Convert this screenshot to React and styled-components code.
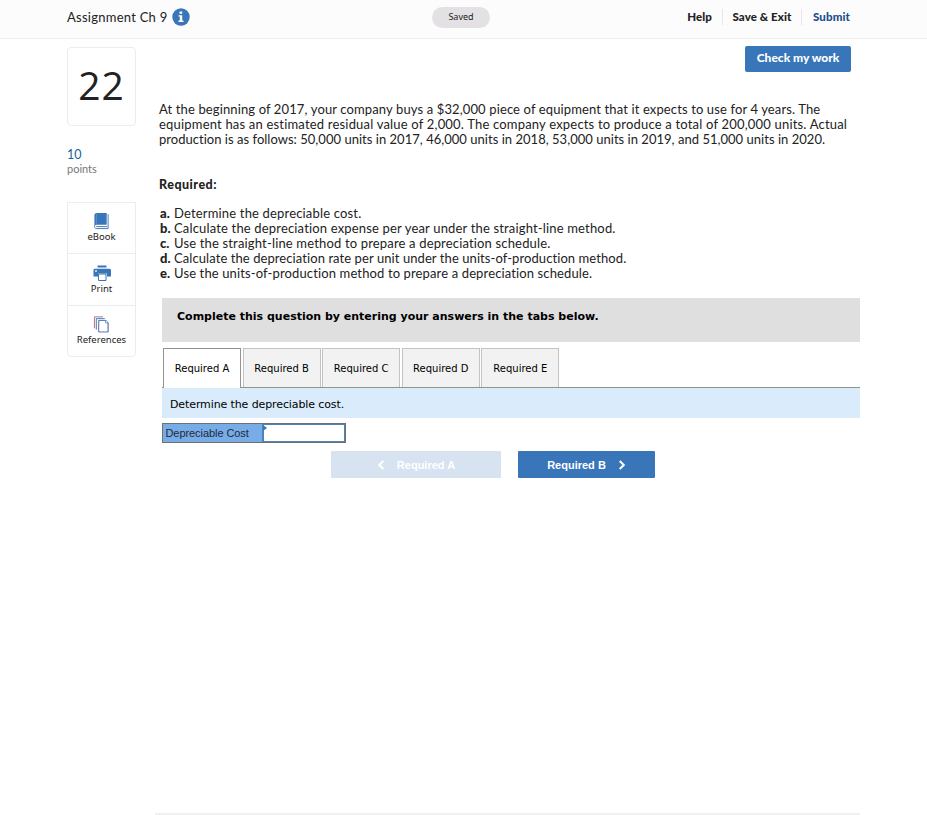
import { useState } from "react";
import styled, { createGlobalStyle } from "styled-components";

const intro = [
  {
    text: "At the beginning of 2017, your company buys a $32,000 piece of equipment that it expects to use for 4 years. The",
    spacing: 0.125,
  },
  {
    text: "equipment has an estimated residual value of 2,000. The company expects to produce a total of 200,000 units. Actual",
    spacing: 0.19,
  },
  {
    text: "production is as follows: 50,000 units in 2017, 46,000 units in 2018, 53,000 units in 2019, and 51,000 units in 2020.",
    spacing: 0.025,
  },
];

const tasks = [
  { mark: "a.", text: "Determine the depreciable cost.", spacing: 0.17 },
  {
    mark: "b.",
    text: "Calculate the depreciation expense per year under the straight-line method.",
    spacing: 0.165,
  },
  {
    mark: "c.",
    text: "Use the straight-line method to prepare a depreciation schedule.",
    spacing: 0.165,
  },
  {
    mark: "d.",
    text: "Calculate the depreciation rate per unit under the units-of-production method.",
    spacing: 0.08,
  },
  {
    mark: "e.",
    text: "Use the units-of-production method to prepare a depreciation schedule.",
    spacing: 0.13,
  },
];

const tabs = ["Required A", "Required B", "Required C", "Required D", "Required E"];

const InfoIcon = () => (
  <svg width="18" height="18" viewBox="0 0 18 18">
    <circle cx="9" cy="9" r="8.7" fill="#3875b9" />
    <path d="M7.5 3.4h2.7v2.3H7.5zM6.5 7.2h3.7v5.4h1.3V14h-5v-1.4h1.3v-4H6.5z" fill="#fff" />
  </svg>
);

const BookIcon = () => (
  <svg width="17" height="18" viewBox="0 0 17 18">
    <path d="M2.6 0H14v12.5H2.5L1 14V1.6z" fill="#3875b9" />
    <path d="M1.4 13.2c-.8 1.6 0 3.3 1.8 3.3h12.3V1.3" fill="none" stroke="#3875b9" strokeWidth="1" />
    <path d="M3 14.4h11.5" stroke="#3875b9" strokeWidth="1" />
    <path d="M3.1 1v11" stroke="#7ba3d0" strokeWidth=".6" />
  </svg>
);

const PrintIcon = () => (
  <svg width="18" height="16" viewBox="0 0 18 16">
    <path d="M4.5 0h9v2h-9zM1.5 3.2h15Q18 3.2 18 4.8V11h-4V8H5v3H.5V4.8Q.5 3.2 1.5 3.2z" fill="#3875b9" />
    <path d="M5.5 8.5h7.5v6.5H5.5z" fill="#fff" stroke="#3875b9" />
    <path d="M2 5.5h2M3 4.5v2" stroke="#fff" strokeWidth=".8" />
  </svg>
);

const PagesIcon = () => (
  <svg width="17" height="18" viewBox="0 0 17 18" fill="#fff" strokeWidth="1">
    <path d="M1 13V.9h9" stroke="#a96d88" />
    <path d="M3 14.5V2.8h9" stroke="#3875b9" />
    <path d="M5.5 4.7h7.7l2.3 2.2v10H5.5z" stroke="#3875b9" />
    <path d="M5.5 5v11.5M15.5 7v9.5" stroke="#ab7795" strokeWidth=".7" />
    <path d="M12.8 4.8v2.5h2.7" stroke="#3875b9" strokeWidth=".7" />
  </svg>
);

const Chevron = ({ left }) => (
  <svg width="8" height="10" viewBox="0 0 8 10" fill="none" stroke="currentColor" strokeWidth="2">
    <path d={left ? "M6.3 1 2.2 5l4.1 4" : "M1.7 1l4.1 4-4.1 4"} />
  </svg>
);

function App() {
  const [active, setActive] = useState(0);
  const [cost, setCost] = useState("");

  return (
    <Page>
      <GlobalStyle />
      <Header>
        <Title>Assignment Ch 9</Title>
        <InfoIcon />
        <Saved>Saved</Saved>
        <HeaderNav>
          <NavItem $width={35}>Help</NavItem>
          <NavItem $width={78}>Save &amp; Exit</NavItem>
          <NavItem $width={59} $blue>
            Submit
          </NavItem>
        </HeaderNav>
      </Header>

      <Body>
        <Side>
          <QuestionNumber>22</QuestionNumber>
          <Points>
            <strong>10</strong>
            <span>points</span>
          </Points>
          <Tools>
            <Tool $height={50}>
              <BookIcon />
              <span>eBook</span>
            </Tool>
            <Tool $height={52} $top={11}>
              <PrintIcon />
              <span>Print</span>
            </Tool>
            <Tool $height={51}>
              <PagesIcon />
              <span>References</span>
            </Tool>
          </Tools>
        </Side>

        <Main>
          <CheckButton>Check my work</CheckButton>
          <Question>
            {intro.map((line) => (
              <Line key={line.text} $spacing={line.spacing}>
                {line.text}
              </Line>
            ))}
            <Heading>Required:</Heading>
            {tasks.map((task) => (
              <Line key={task.mark} $spacing={task.spacing}>
                <Mark>{task.mark}</Mark>
                {task.text}
              </Line>
            ))}
          </Question>

          <Answer>
            <Banner>Complete this question by entering your answers in the tabs below.</Banner>
            <TabList>
              {tabs.map((tab, i) => (
                <Tab key={tab} $active={i === active} onClick={() => setActive(i)}>
                  {tab}
                </Tab>
              ))}
            </TabList>
            <Prompt>Determine the depreciable cost.</Prompt>
            <CostRow>
              <CostLabel>Depreciable Cost</CostLabel>
              <CostCell>
                <CostInput value={cost} onChange={(e) => setCost(e.target.value)} />
              </CostCell>
            </CostRow>
            <Pager>
              <PagerButton $width={170} $disabled>
                <Chevron left />
                Required A
              </PagerButton>
              <PagerButton $width={137}>
                Required B
                <Chevron />
              </PagerButton>
            </Pager>
          </Answer>
          <Divider />
        </Main>
      </Body>
    </Page>
  );
}

export default App;

const GlobalStyle = createGlobalStyle`
  * {
    box-sizing: border-box;
  }

  body {
    margin: 0;
    background: #fff;
  }

  svg {
    display: block;
    flex: none;
  }

  button {
    margin: 0;
    padding: 0;
    cursor: pointer;
  }
`;

const Page = styled.div`
  width: 927px;
  height: 815px;
  overflow: hidden;
  color: #222;
  font-family: Lato, "Open Sans", sans-serif;
`;

const Header = styled.header`
  display: flex;
  align-items: center;
  height: 39px;
  padding: 0 0 4px 67px;
  background: #fcfcfc;
  border-bottom: 1px solid #ececec;
`;

const Title = styled.div`
  width: 105px;
  font-size: 13px;
  letter-spacing: 0.25px;
  white-space: nowrap;
`;

const Saved = styled.div`
  width: 58px;
  height: 21px;
  margin-left: 242px;
  border-radius: 11px;
  background: #e4e1e5;
  font-family: "Noto Sans", sans-serif;
  font-size: 9px;
  line-height: 20px;
  text-align: center;
`;

const HeaderNav = styled.nav`
  display: flex;
  margin-left: 196px;
`;

const NavItem = styled.div`
  box-sizing: content-box;
  width: ${({ $width }) => $width}px;
  height: 16px;
  border-right: 1px solid #e7e7e7;
  color: ${({ $blue }) => ($blue ? "#1d4f8c" : "#222")};
  font-size: 11.5px;
  font-weight: 900;
  line-height: 16px;
  letter-spacing: 0.1px;
  text-align: center;
  white-space: nowrap;

  &:first-child {
    padding-right: 10px;
    margin-left: -9px;
    text-align: right;
  }

  &:last-child {
    border-right: 0;
  }
`;

const Body = styled.div`
  display: flex;
  padding-left: 67px;
`;

const Side = styled.aside`
  width: 69px;
  padding-top: 8px;
`;

const QuestionNumber = styled.div`
  height: 79px;
  border: 1px solid #ececec;
  border-radius: 4px;
  font-family: "Open Sans", sans-serif;
  font-size: 39px;
  line-height: 74px;
  letter-spacing: 1px;
  text-align: center;
`;

const Points = styled.div`
  display: flex;
  flex-direction: column;
  height: 76px;
  padding-top: 22px;
  line-height: 14px;

  strong {
    color: #1b5f99;
    font-size: 12.5px;
    font-weight: 400;
  }

  span {
    color: #777;
    font-size: 11px;
  }
`;

const Tools = styled.div`
  border: 1px solid #ececec;
  border-radius: 0 0 4px 4px;
`;

const Tool = styled.div`
  display: flex;
  flex-direction: column;
  align-items: center;
  height: ${({ $height }) => $height}px;
  padding-top: ${({ $top = 10 }) => $top}px;
  font-family: "Noto Sans", sans-serif;
  font-size: 9.5px;
  line-height: 14px;

  & + & {
    border-top: 1px solid #ececec;
  }

  svg {
    height: 17px;
  }
`;

const Main = styled.main`
  display: flex;
  flex-direction: column;
  width: 705px;
  height: 776px;
  margin-left: 19px;
`;

const CheckButton = styled.button`
  align-self: flex-end;
  width: 106px;
  height: 26px;
  margin: 7px 9px 0 0;
  padding-bottom: 3px;
  border: 0;
  border-radius: 2px;
  background: #3875b9;
  color: #fff;
  font-family: Lato, sans-serif;
  font-size: 12px;
  font-weight: 900;
`;

const Question = styled.section`
  height: 196px;
  margin-top: 30px;
  padding-left: 4px;
`;

const Line = styled.div`
  height: 15px;
  font-size: 13px;
  line-height: 15px;
  letter-spacing: ${({ $spacing }) => $spacing}px;
  white-space: nowrap;
`;

const Heading = styled.div`
  margin: 30px 0 14px;
  font-size: 12.5px;
  font-weight: 900;
  line-height: 15px;
  letter-spacing: 0.5px;
`;

const Mark = styled.b`
  display: inline-block;
  width: 15px;
  padding-left: 1px;
  font-weight: 900;
  letter-spacing: 0;
`;

const Answer = styled.section`
  margin-left: 7px;
`;

const Banner = styled.div`
  height: 44px;
  padding: 11px 15px;
  background: #dfdfdf;
  color: #000;
  font-family: "DejaVu Sans", sans-serif;
  font-size: 11px;
  font-weight: 700;
  line-height: 16px;
`;

const TabList = styled.div`
  display: flex;
  gap: 1.6px;
  height: 40px;
  margin-top: 6px;
  padding-left: 1px;
  border-bottom: 1px solid #929292;
`;

const Tab = styled.button`
  width: 78px;
  height: ${({ $active }) => ($active ? 40 : 39)}px;
  border: 1px solid ${({ $active }) => ($active ? "#929292" : "#c3c3c3")};
  border-bottom: 0;
  background: ${({ $active }) => ($active ? "#fff" : "#f2f2f2")};
  color: #000;
  font-family: "DejaVu Sans", sans-serif;
  font-size: 10px;
  white-space: nowrap;
`;

const Prompt = styled.div`
  height: 30px;
  padding-left: 8px;
  background: #daecfb;
  color: #000;
  font-family: "DejaVu Sans", sans-serif;
  font-size: 11px;
  line-height: 33px;
  letter-spacing: -0.11px;
`;

const CostRow = styled.div`
  display: flex;
  width: 184px;
  height: 20px;
  margin-top: 5px;
  border: 1px solid #707070;
`;

const CostLabel = styled.div`
  width: 99px;
  padding-left: 2.5px;
  background: #78ace6;
  color: #1c2a3c;
  font-family: "Liberation Sans", Arial, sans-serif;
  font-size: 11px;
  line-height: 19px;
  letter-spacing: -0.07px;
  white-space: nowrap;
`;

const CostCell = styled.div`
  position: relative;
  flex: 1;

  &::after {
    content: "";
    position: absolute;
    left: 1px;
    top: 1px;
    border: solid transparent;
    border-width: 3px 0 3px 4px;
    border-left-color: #3875b9;
  }
`;

const CostInput = styled.input`
  display: block;
  width: 100%;
  height: 18px;
  padding: 0 4px;
  border: 1px solid #4b83bd;
  border-left-width: 2px;
  outline: 0;
  background: #fff;
  font-family: "Liberation Sans", Arial, sans-serif;
  font-size: 11px;
`;

const Pager = styled.div`
  display: flex;
  gap: 17px;
  margin: 8px 0 0 169px;
`;

const PagerButton = styled.button`
  display: flex;
  align-items: center;
  justify-content: center;
  gap: 12px;
  width: ${({ $width }) => $width}px;
  height: 27px;
  border: 0;
  border-radius: 1px;
  background: ${({ $disabled }) => ($disabled ? "#d7e3f1" : "#3875b9")};
  color: #fff;
  font-family: "Liberation Sans", Arial, sans-serif;
  font-size: 11px;
  font-weight: 700;
`;

const Divider = styled.div`
  height: 2px;
  margin-top: auto;
  background: #f0f0f0;
`;
